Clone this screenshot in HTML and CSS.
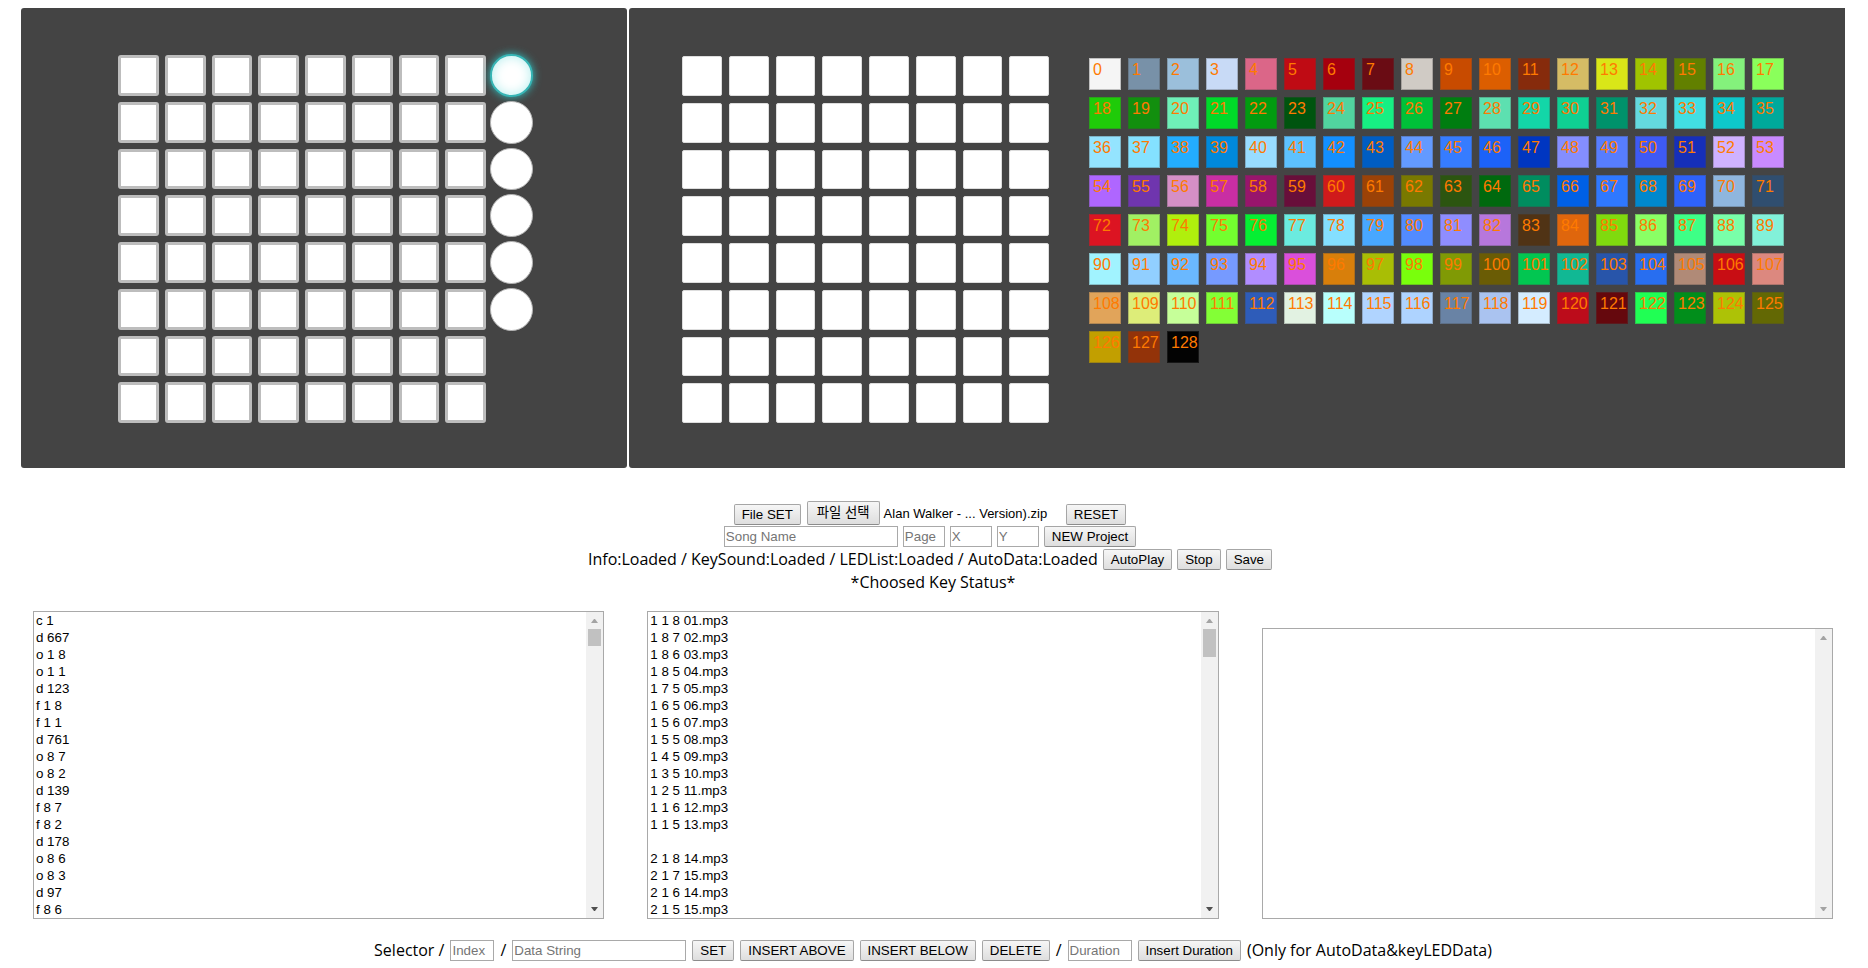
FILE: index.html
```html
<!DOCTYPE html>
<html lang="ko">
<head>
<meta charset="utf-8">
<title>Launchpad Project Editor</title>
<link rel="stylesheet" href="styles.css">
</head>
<body>
<main class="page">
  <section class="panels">
    <div class="panel panel-play">
      <div class="pads pads-play" id="play-pads"></div>
      <div class="chains" id="chains"></div>
    </div>
    <div class="panel panel-edit">
      <div class="pads pads-edit" id="edit-pads"></div>
      <div class="palette" id="palette"></div>
    </div>
  </section>

  <section class="controls">
    <div class="row row-file">
      <button class="btn" type="button">File SET</button>
      <span class="file">
        <button class="btn btn-file" type="button">파일 선택</button>
        <span class="file-name">Alan Walker - ... Version).zip</span>
      </span>
      <button class="btn" type="button">RESET</button>
    </div>
    <div class="row">
      <input class="field field-long" type="text" placeholder="Song Name" aria-label="Song Name">
      <input class="field field-small" type="text" placeholder="Page" aria-label="Page">
      <input class="field field-small" type="text" placeholder="X" aria-label="X">
      <input class="field field-small" type="text" placeholder="Y" aria-label="Y">
      <button class="btn" type="button">NEW Project</button>
    </div>
    <div class="row">
      <span>Info:Loaded / KeySound:Loaded / LEDList:Loaded / AutoData:Loaded</span>
      <button class="btn" type="button">AutoPlay</button>
      <button class="btn" type="button">Stop</button>
      <button class="btn" type="button">Save</button>
    </div>
    <p class="status">*Choosed Key Status*</p>
  </section>

  <section class="lists">
    <div class="list">
      <textarea class="list-text" rows="18" aria-label="Auto data">c 1
d 667
o 1 8
o 1 1
d 123
f 1 8
f 1 1
d 761
o 8 7
o 8 2
d 139
f 8 7
f 8 2
d 178
o 8 6
o 8 3
d 97
f 8 6</textarea>
      <div class="bar" aria-hidden="true">
        <svg class="arrow" viewBox="0 0 17 17"><path d="M5 11h7l-3-4h-1z" fill="#a3a3a3"/></svg>
        <span class="thumb"></span>
        <svg class="arrow arrow-end" viewBox="0 0 17 17"><path d="M5 6h7l-3 4h-1z" fill="#505050"/></svg>
      </div>
    </div>
    <div class="list">
      <textarea class="list-text" rows="18" aria-label="Key sounds">1 1 8 01.mp3
1 8 7 02.mp3
1 8 6 03.mp3
1 8 5 04.mp3
1 7 5 05.mp3
1 6 5 06.mp3
1 5 6 07.mp3
1 5 5 08.mp3
1 4 5 09.mp3
1 3 5 10.mp3
1 2 5 11.mp3
1 1 6 12.mp3
1 1 5 13.mp3

2 1 8 14.mp3
2 1 7 15.mp3
2 1 6 14.mp3
2 1 5 15.mp3</textarea>
      <div class="bar" aria-hidden="true">
        <svg class="arrow" viewBox="0 0 17 17"><path d="M5 11h7l-3-4h-1z" fill="#a3a3a3"/></svg>
        <span class="thumb thumb-long"></span>
        <svg class="arrow arrow-end" viewBox="0 0 17 17"><path d="M5 6h7l-3 4h-1z" fill="#505050"/></svg>
      </div>
    </div>
    <div class="list">
      <textarea class="list-text" rows="17" aria-label="Key LED data"></textarea>
      <div class="bar" aria-hidden="true">
        <svg class="arrow" viewBox="0 0 17 17"><path d="M5 11h7l-3-4h-1z" fill="#a3a3a3"/></svg>
        <svg class="arrow arrow-end" viewBox="0 0 17 17"><path d="M5 6h7l-3 4h-1z" fill="#a3a3a3"/></svg>
      </div>
    </div>
  </section>

  <section class="row row-selector">
    <label for="index">Selector /</label>
    <input class="field field-index" id="index" type="text" placeholder="Index">
    <span>/</span>
    <input class="field field-long" type="text" placeholder="Data String" aria-label="Data String">
    <button class="btn" type="button">SET</button>
    <button class="btn" type="button">INSERT ABOVE</button>
    <button class="btn" type="button">INSERT BELOW</button>
    <button class="btn" type="button">DELETE</button>
    <span>/</span>
    <input class="field field-duration" type="text" placeholder="Duration" aria-label="Duration">
    <button class="btn" type="button">Insert Duration</button>
    <span>(Only for AutoData&amp;keyLEDData)</span>
  </section>
</main>
<script src="app.js"></script>
</body>
</html>
```
FILE: styles.css
```css
* {
  box-sizing: border-box;
}

body {
  margin: 0;
  background: #fff;
  color: #000;
  font-family: "Open Sans", "Noto Sans", "Noto Sans CJK KR", sans-serif;
  font-size: 16px;
  line-height: 23px;
}

button {
  padding: 0;
  margin: 0;
}

.page {
  padding: 8px 23px 8px 21px;
}

.panels {
  display: grid;
  grid-template-columns: 606fr 1216fr;
  gap: 2px;
}

.panel {
  display: flex;
  align-items: flex-start;
  background: #444;
  border-radius: 3px;
}

.panel-play {
  padding: 46px 0 44px 97px;
  gap: 4px;
}

.panel-edit {
  padding: 48px 0 44px 53px;
  gap: 40px;
  border-radius: 3px 0 0 3px;
}

.pads {
  display: grid;
  flex: none;
  grid-template-columns: repeat(8, 1fr);
}

.pads-play {
  width: 368px;
  margin-top: 1px;
  gap: 6px;
}

.pads-edit {
  width: 367px;
  gap: 7px;
}

.pad {
  aspect-ratio: 1;
  background: #fff;
  border: 3px solid #bdbdbd;
  border-radius: 3px;
}

.pads-edit .pad {
  border: 1px solid #ddd;
  border-radius: 2px;
}

.chains {
  display: grid;
  grid-template-rows: repeat(8, 1fr);
  gap: 4px;
  height: 370px;
}

.chain {
  aspect-ratio: 1;
  background: #fff;
  border: 1px solid #b5b5b5;
  border-radius: 50%;
}

.chain-active {
  border: 2px solid #37b5b5;
  box-shadow: 0 0 9px #2fc4c4, inset 0 0 12px #b5eeee;
}

.palette {
  display: grid;
  grid-template-columns: repeat(18, 32px);
  gap: 7px;
  margin-top: 2px;
}

.swatch {
  display: flex;
  justify-content: flex-start;
  align-items: flex-start;
  height: 32px;
  padding: 2px 0 0 3px;
  border: 1px solid rgba(68, 68, 68, 0.3);
  color: #ff7a00;
  font-family: "Liberation Sans", Arial, sans-serif;
  font-size: 16px;
  line-height: 18px;
}

.controls {
  padding-top: 32px;
}

.row {
  display: flex;
  justify-content: center;
  align-items: center;
  gap: 5px;
  height: 23px;
  white-space: pre;
}

.controls .row {
  padding-right: 6px;
}

.controls .row-file {
  height: 25px;
  gap: 6px;
  align-items: flex-end;
}

.file {
  display: flex;
  align-items: center;
  gap: 4px;
  width: 253px;
}

.file-name,
.btn,
.field,
.list-text {
  font-family: "Liberation Sans", Arial, "Noto Sans CJK KR", sans-serif;
}

.file-name {
  padding-top: 2px;
  font-size: 13px;
}

.btn {
  height: 21px;
  padding: 0 7px;
  background: linear-gradient(#f6f6f6, #dedede);
  border: 1px solid #a6a6a6;
  border-bottom-color: #8c8c8c;
  border-radius: 2px;
  color: #000;
  line-height: 17px;
}

.btn-file {
  height: 24px;
  padding: 0 9px;
}

.field {
  height: 21px;
  padding: 1px;
  border: 1px solid #a9a9a9;
}

.field::placeholder {
  color: #757575;
}

.field-long {
  width: 174px;
}

.field-small {
  width: 42px;
}

.field-index {
  width: 44px;
}

.field-duration {
  width: 64px;
}

.status {
  margin: 0;
  text-align: center;
}

.lists {
  display: grid;
  grid-template-columns: repeat(3, 1fr);
  align-items: end;
  gap: 43px;
  padding: 17px 12px 0;
}

.list {
  display: flex;
  border: 1px solid #a9a9a9;
}

.list-text {
  flex: 1;
  min-width: 0;
  padding: 0 2px;
  border: 0;
  overflow: hidden;
  resize: none;
  color: #000;
  line-height: 17px;
}

.bar {
  display: flex;
  flex-direction: column;
  width: 17px;
  background: #f1f1f1;
}

.arrow {
  width: 17px;
  height: 17px;
}

.arrow-end {
  margin-top: auto;
}

.thumb {
  height: 17px;
  margin: 0 2px;
  background: #c1c1c1;
}

.thumb-long {
  height: 28px;
}

.row-selector {
  gap: 6px;
  margin-top: 20px;
}
```
FILE: app.js
```js
const colors = [
  '#f5f5f5 #7891a8 #9bbfdb #c8daf6 #db6688 #bf0b14 #a5000e #6a0c14 #d0cbc5 #c84b00 #dc5e00 #862b0c #d5bc65 #d9e618 #a0c400 #628000 #84f17c #8aff5b',
  '#1fcb09 #128f0e #6ff0b8 #00da29 #029b10 #00540f #51d49f #17ef83 #00c139 #007d10 #5de0b0 #13d6a8 #0fd093 #00926b #64d9df #42dfe3 #0ec8ca #00a99b',
  '#94e4ff #84e1ff #23adff #0089dc #98dcff #5dc1ff #138fff #005dc3 #639aff #367cff #1c62f8 #0036c1 #848eff #577dff #3e5af5 #162fb9 #cfb2ff #c98aff',
  '#af66ff #6f35ae #d58fc6 #c92ea3 #98156c #680e3a #d01a1b #9b4207 #797900 #2c5510 #00690e #008d5f #0060e6 #2f78ff #0088cd #2e62fa #8fb6de #304e6f',
  '#dc1422 #a1f063 #b0ef0d #73ff2f #06ef33 #6bebdf #84dfff #48a7ff #528bff #8f8dff #b777dc #503315 #df660d #80da0e #8aff65 #3eff86 #79ffa9 #82f1d9',
  '#a1f3ff #91cfff #6ab8ff #769aff #b18dff #da4fdb #d87f0b #a9be05 #79ff0c #809a05 #6a5c05 #02c651 #11b894 #2855aa #286ef0 #b08a77 #c80d14 #dc887f',
  '#e1a45a #dded79 #c6ff99 #83ff36 #2e5cb9 #e2f2e2 #b8fffc #b0d4ff #aed3ff #6983a5 #aac3f0 #d4ecff #bc0c1b #65080d #20ff54 #018e1b #adc206 #636804',
  '#c29f00 #933309 #030303'
].join(' ').split(' ');

function addButton(parentId, className, label) {
  const button = document.createElement('button');
  button.type = 'button';
  button.className = className;
  button.setAttribute('aria-label', label);
  document.getElementById(parentId).append(button);
  return button;
}

for (let y = 1; y <= 8; y++) {
  for (let x = 1; x <= 8; x++) {
    addButton('play-pads', 'pad', `Play pad ${y} ${x}`);
    addButton('edit-pads', 'pad', `Edit pad ${y} ${x}`);
  }
}

for (let n = 1; n <= 6; n++) {
  addButton('chains', n === 1 ? 'chain chain-active' : 'chain', `Chain ${n}`);
}

colors.forEach((color, n) => {
  const swatch = addButton('palette', 'swatch', `Color ${n}`);
  swatch.textContent = n;
  swatch.style.backgroundColor = color;
});
```
